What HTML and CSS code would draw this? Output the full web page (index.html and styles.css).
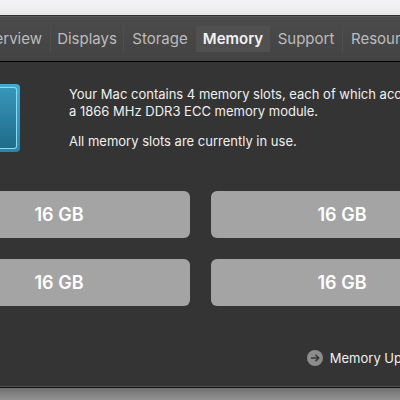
FILE: index.html
```
<!DOCTYPE html>
<html lang="en">
<head>
<meta charset="utf-8">
<title>Memory</title>
<link rel="stylesheet" href="styles.css">
</head>
<body>
<div class="backdrop"></div>
<main class="window">
  <nav class="toolbar" aria-label="Sections">
    <button class="tab" type="button">erview</button>
    <button class="tab" type="button">Displays</button>
    <button class="tab" type="button">Storage</button>
    <button class="tab tab-active" type="button" aria-current="page">Memory</button>
    <button class="tab" type="button">Support</button>
    <button class="tab" type="button">Resour</button>
  </nav>
  <section class="panel">
    <div class="summary">
      <div class="chip"><div class="chip-face"></div></div>
      <div class="description">
        <p>Your Mac contains 4 memory slots, each of which acc<br>a 1866 MHz DDR3 ECC memory module.</p>
        <p>All memory slots are currently in use.</p>
      </div>
    </div>
    <div class="slots">
      <div class="slot">16 GB</div>
      <div class="slot">16 GB</div>
      <div class="slot">16 GB</div>
      <div class="slot">16 GB</div>
    </div>
    <a class="upgrade" href="#">
      <svg class="arrow" viewBox="0 0 16 16" aria-hidden="true">
        <circle cx="8" cy="8" r="8" fill="#8c8c8c"/>
        <path d="M4 8h7.5M8.5 4.8 11.7 8l-3.2 3.2" fill="none" stroke="#393939" stroke-width="1.6"/>
      </svg>
      <span>Memory Up</span>
    </a>
  </section>
</main>
<div class="desktop"></div>
</body>
</html>
```
FILE: styles.css
```
* {
  box-sizing: border-box;
}

body {
  margin: 0;
  min-height: 100vh;
  display: flex;
  flex-direction: column;
  overflow: hidden;
  background: #888;
  color: #f0f0f0;
  font-family: Inter, "Liberation Sans", sans-serif;
}

.backdrop {
  height: 15px;
  background: linear-gradient(#f4f4f6, #eeeef0 60%, #e6e6e6);
}

.window {
  overflow: hidden;
  background: #343434;
  border-top: 1px solid #303030;
  border-bottom: 1px solid #111;
}

.toolbar {
  display: flex;
  height: 46px;
  padding-top: 9px;
  background: linear-gradient(#4b4b4b, #434343);
  border-top: 1px solid #5c5c5c;
  border-bottom: 1px solid #000;
}

.tab {
  flex: none;
  width: 73px;
  height: 26px;
  padding: 0;
  border: 0;
  border-right: 1px solid #4f4f4f;
  background: none;
  color: #bcbcbc;
  font: 400 15px/26px Inter, "Liberation Sans", sans-serif;
  text-align: center;
  white-space: nowrap;
}

.tab:first-child {
  display: flex;
  justify-content: flex-end;
  width: 51px;
  padding-right: 8px;
}

.tab:last-child {
  flex: 1;
  padding-left: 8px;
  border-right: 0;
  text-align: left;
}

.tab-active {
  border-color: #505050;
  background: #505050;
  color: #f2f2f2;
  font-weight: 600;
}

.panel {
  display: flex;
  flex-direction: column;
  border-bottom: 1px solid #505050;
}

.summary {
  display: flex;
  gap: 49px;
  padding-top: 22px;
}

.chip {
  flex: none;
  width: 20px;
  height: 68px;
  padding: 3px 3px 3px 0;
  border-radius: 0 4px 4px 0;
  background: linear-gradient(#43abd0, #2d83a5);
}

.chip-face {
  height: 100%;
  border: 1px solid #8dd9f2;
  border-left: 0;
  border-radius: 0 3px 3px 0;
  background: linear-gradient(#3796ba, #1f6b8a);
}

.description {
  flex: none;
  padding-top: 2px;
  font-size: 13px;
  font-weight: 400;
  line-height: 17px;
  white-space: nowrap;
}

.description p {
  margin: 0 0 13px;
}

.slots {
  display: grid;
  grid-template-columns: 1fr 1fr;
  gap: 21px;
  margin: 28px -73px 0 -72px;
}

.slot {
  height: 47px;
  border-radius: 6px;
  background: #a4a4a4;
  color: #fff;
  font-size: 18px;
  font-weight: 600;
  line-height: 47px;
  text-align: center;
}

.upgrade {
  display: flex;
  align-items: center;
  align-self: flex-end;
  gap: 7px;
  margin: 42px -2px 18px 0;
  color: #f0f0f0;
  font-size: 13px;
  font-weight: 400;
  line-height: 20px;
  text-decoration: none;
  white-space: nowrap;
}

.arrow {
  width: 16px;
  height: 16px;
}

.desktop {
  flex: 1;
  background: linear-gradient(#707070, #929292);
}
```
